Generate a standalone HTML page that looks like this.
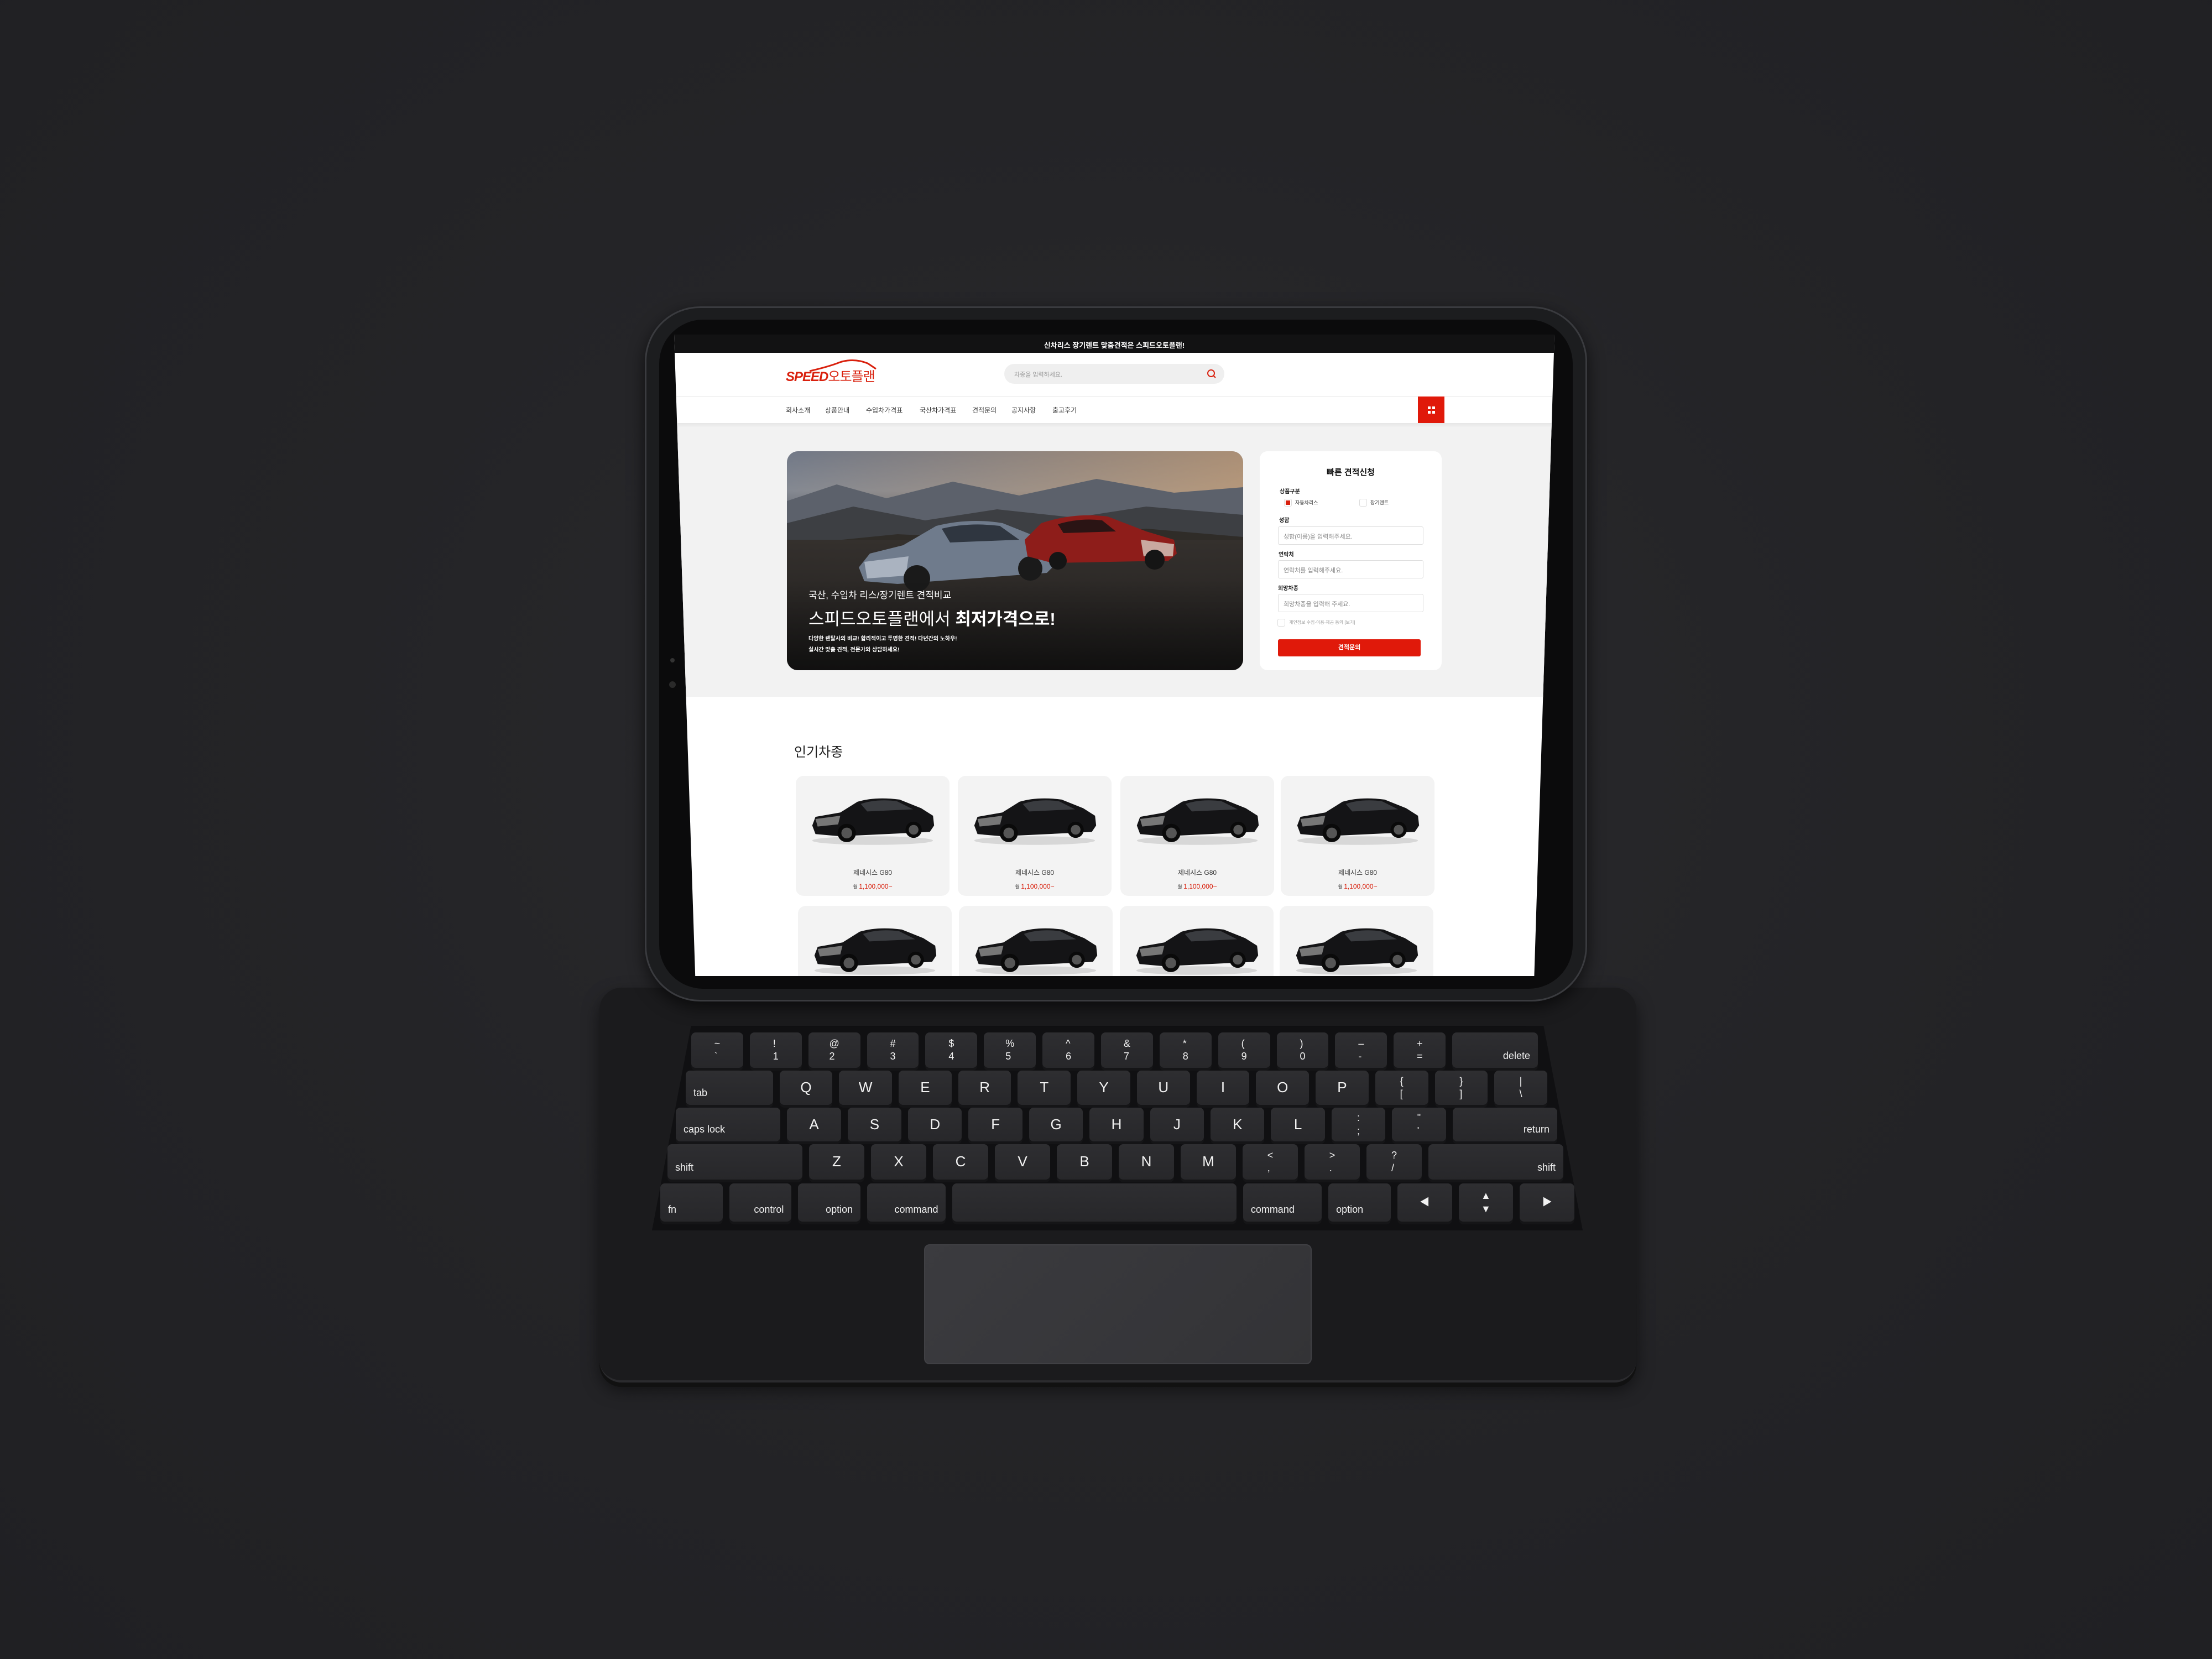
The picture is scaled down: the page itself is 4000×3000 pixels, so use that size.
<!DOCTYPE html>
<html><head><meta charset="utf-8"><style>
*{margin:0;padding:0;box-sizing:border-box}
body{width:4000px;height:3000px;background:#242427;position:relative;overflow:hidden;font-family:"Liberation Sans","Noto Sans CJK KR",sans-serif}
.abs{position:absolute}
#bg{left:0;top:0;width:4000px;height:3000px;background:radial-gradient(ellipse at 50% 45%,#2a2a2d 0%,#242427 50%,#202023 100%)}
#base{left:1084px;top:1786px;width:1875px;height:714px;background:#1b1b1d;border-radius:40px;box-shadow:0 8px 0 #111,0 14px 30px rgba(0,0,0,.5);border-bottom:4px solid #2b2b2e}
#well{left:1179px;top:1855px;width:1683px;height:370px;background:#101012;clip-path:polygon(4.2% 0,95.8% 0,100% 100%,0 100%)}
.row{position:absolute;display:flex;gap:12px}
.k{background:linear-gradient(#2e2e31,#27272a);border-radius:8px;box-shadow:0 5px 0 #151517;color:#f2f2f2;font-size:26px;display:flex;flex-direction:column;align-items:center;justify-content:center;line-height:1.3;flex:1 1 0}
.k.s{font-size:18px}
.k.l{align-items:flex-start;justify-content:flex-end;padding:0 0 10px 14px;font-size:18px}
.k.r{align-items:flex-end;justify-content:flex-end;padding:0 14px 10px 0;font-size:18px}
#pad{left:1671px;top:2250px;width:701px;height:217px;background:linear-gradient(135deg,#3b3b3f,#333336);border-radius:10px;border:2px solid #404044}
#ipad{left:1166px;top:554px;width:1704px;height:1257px;background:#1c1d1f;border-radius:100px;border:3px solid #3a3b3f;box-shadow:0 10px 30px rgba(0,0,0,.6)}
#bezel{left:1192px;top:578px;width:1652px;height:1210px;background:#0b0b0c;border-radius:80px}
#screen{left:1219px;top:605px;width:1592px;height:1160px;background:#fff;clip-path:polygon(0 0,100% 0,97.7% 100%,2.4% 100%);border-radius:0 0 30px 30px;overflow:hidden}
#screen *{position:absolute}
.nav{font-size:12px;color:#333;top:128px}
.card{width:278px;height:217px;background:#f3f3f3;border-radius:14px}
.card .n{width:100%;text-align:center;top:166px;font-size:12px;color:#333}
.card .p{width:100%;text-align:center;top:193px;font-size:12px;color:#d9200d}
.card svg{left:22px;top:28px}
.lbl{font-size:10px;color:#222;font-weight:bold}
.inp{width:263px;height:33px;border:1px solid #ddd;border-radius:3px;font-size:11px;color:#888;padding:9px 0 0 9px;background:#fff}
</style></head><body>
<div id="bg" class="abs"></div>
<svg width="0" height="0" style="position:absolute"><defs>
<symbol id="car" viewBox="0 0 240 100">
<ellipse cx="120" cy="90" rx="112" ry="8" fill="#bbb" opacity=".5"/>
<path d="M8 62 L14 46 L60 38 L92 18 Q125 8 170 14 L210 30 L232 44 L234 62 L226 74 L60 82 L14 78 Z" fill="#141416"/>
<path d="M98 22 Q128 12 165 17 L195 32 L110 36 Z" fill="#3a3c40"/>
<path d="M14 50 L60 44 L56 60 L18 64 Z" fill="#777"/>
<circle cx="72" cy="76" r="17" fill="#0a0a0a"/><circle cx="72" cy="76" r="10" fill="#555"/>
<circle cx="196" cy="70" r="15" fill="#0a0a0a"/><circle cx="196" cy="70" r="9" fill="#555"/>
</symbol></defs></svg>

<div id="base" class="abs"></div>
<div id="well" class="abs"></div>
<div class="row" style="left:1250px;top:1867px;width:1531px;height:64px">
<div class="k s">~<br>`</div><div class="k s">!<br>1</div><div class="k s">@<br>2</div><div class="k s">#<br>3</div><div class="k s">$<br>4</div><div class="k s">%<br>5</div><div class="k s">^<br>6</div><div class="k s">&amp;<br>7</div><div class="k s">*<br>8</div><div class="k s">(<br>9</div><div class="k s">)<br>0</div><div class="k s">–<br>-</div><div class="k s">+<br>=</div><div class="k r" style="flex-grow:1.5">delete</div></div>
<div class="row" style="left:1240px;top:1936px;width:1558px;height:62px">
<div class="k l" style="flex-grow:1.5">tab</div><div class="k">Q</div><div class="k">W</div><div class="k">E</div><div class="k">R</div><div class="k">T</div><div class="k">Y</div><div class="k">U</div><div class="k">I</div><div class="k">O</div><div class="k">P</div><div class="k s">{<br>[</div><div class="k s">}<br>]</div><div class="k s">|<br>\</div></div>
<div class="row" style="left:1222px;top:2003px;width:1594px;height:61px">
<div class="k l" style="flex-grow:1.8">caps lock</div><div class="k">A</div><div class="k">S</div><div class="k">D</div><div class="k">F</div><div class="k">G</div><div class="k">H</div><div class="k">J</div><div class="k">K</div><div class="k">L</div><div class="k s">:<br>;</div><div class="k s">"<br>'</div><div class="k r" style="flex-grow:1.8">return</div></div>
<div class="row" style="left:1207px;top:2069px;width:1620px;height:64px">
<div class="k l" style="flex-grow:2.3">shift</div><div class="k">Z</div><div class="k">X</div><div class="k">C</div><div class="k">V</div><div class="k">B</div><div class="k">N</div><div class="k">M</div><div class="k s">&lt;<br>,</div><div class="k s">&gt;<br>.</div><div class="k s">?<br>/</div><div class="k r" style="flex-grow:2.3">shift</div></div>
<div class="row" style="left:1194px;top:2140px;width:1653px;height:69px">
<div class="k l">fn</div><div class="k r" style="font-size:18px">control</div><div class="k r">option</div><div class="k r" style="flex-grow:1.3">command</div><div class="k" style="flex-grow:5.2"></div><div class="k l" style="flex-grow:1.3">command</div><div class="k l">option</div><div class="k s">◀</div><div class="k s">▲<br>▼</div><div class="k s">▶</div></div>
<div id="pad" class="abs"></div>

<div id="ipad" class="abs"></div>
<div id="bezel" class="abs"></div>
<div class="abs" style="left:1212px;top:1190px;width:8px;height:8px;border-radius:50%;background:#333"></div>
<div class="abs" style="left:1210px;top:1232px;width:12px;height:12px;border-radius:50%;background:#2a2a2a"></div>

<div id="screen" class="abs">
<div style="left:0;top:0;width:1592px;height:33px;background:#121213"></div>
<div style="left:0;top:9px;width:1592px;text-align:center;color:#fff;font-size:13px;font-weight:bold">신차리스 장기렌트 맞춤견적은 스피드오토플랜!</div>
<div style="left:202px;top:56px;font-size:24px;color:#d9200d;font-weight:bold;font-style:italic;letter-spacing:-1px">SPEED<span style="position:static;font-weight:normal;font-style:normal;font-size:24px">오토플랜</span></div>
<svg style="left:240px;top:44px" width="130" height="24" viewBox="0 0 130 24"><path d="M5 22 Q40 14 60 6 Q85 -2 110 8 L125 18" stroke="#d9200d" stroke-width="3" fill="none"/></svg>
<div style="left:597px;top:53px;width:398px;height:36px;background:#efefef;border-radius:18px"></div>
<div style="left:615px;top:64px;font-size:11px;color:#999">차종을 입력하세요.</div>
<svg style="left:963px;top:62px" width="18" height="18" viewBox="0 0 18 18"><circle cx="8" cy="8" r="6" stroke="#d9200d" stroke-width="2" fill="none"/><path d="M12 12 L16 16" stroke="#d9200d" stroke-width="2"/></svg>
<div style="left:0;top:112px;width:1592px;height:1px;background:#e6e6e6"></div>
<div class="nav" style="left:202px">회사소개</div><div class="nav" style="left:273px">상품안내</div><div class="nav" style="left:347px">수입차가격표</div><div class="nav" style="left:444px">국산차가격표</div><div class="nav" style="left:539px">견적문의</div><div class="nav" style="left:610px">공지사항</div><div class="nav" style="left:684px">출고후기</div>
<div style="left:1345px;top:112px;width:48px;height:48px;background:#e0190a"></div>
<div style="left:1363px;top:130px;width:5px;height:5px;background:#fff"></div><div style="left:1371px;top:130px;width:5px;height:5px;background:#fff"></div><div style="left:1363px;top:138px;width:5px;height:5px;background:#fff"></div><div style="left:1371px;top:138px;width:5px;height:5px;background:#fff"></div>
<div style="left:0;top:160px;width:1592px;height:495px;background:#f2f2f2;box-shadow:inset 0 4px 6px rgba(0,0,0,.05)"></div>

<div style="left:204px;top:211px;width:825px;height:396px;border-radius:20px;overflow:hidden;background:linear-gradient(180deg,#6e7480 0%,#8a8c90 18%,#3e3f42 38%,#2c2a28 60%,#1d1c1b 100%)">
<div style="left:0;top:0;width:825px;height:120px;background:linear-gradient(90deg,rgba(120,130,150,.3),rgba(210,160,110,.6))"></div>
<svg style="left:0;top:30px" width="825" height="200" viewBox="0 0 825 200"><path d="M0 60 L90 30 L180 55 L300 25 L420 50 L560 20 L700 45 L825 35 L825 200 L0 200Z" fill="#5c616b"/><path d="M0 100 L120 70 L250 95 L380 75 L520 90 L650 70 L825 85 L825 200 L0 200Z" fill="#3d3f43"/><path d="M0 140 L200 120 L420 130 L650 110 L825 125 L825 200 L0 200Z" fill="#2f2c28"/></svg>
<div style="left:0;top:160px;width:825px;height:236px;background:linear-gradient(180deg,#34302d,#2a2725 50%,#1e1d1c)"></div>
<svg style="left:120px;top:90px" width="420" height="170" viewBox="0 0 420 170"><path d="M10 120 L30 95 L90 80 L150 45 Q210 30 270 40 L320 60 L360 80 L370 110 L350 130 L80 150 L20 145Z" fill="#6f7b8c"/><path d="M160 50 Q210 38 265 45 L300 70 L175 75Z" fill="#2f3640"/><path d="M20 110 L100 100 L95 135 L25 140Z" fill="#aab3c0"/><circle cx="115" cy="140" r="24" fill="#1a1a1a"/><circle cx="320" cy="122" r="22" fill="#1a1a1a"/></svg>
<svg style="left:420px;top:90px" width="300" height="130" viewBox="0 0 300 130"><path d="M10 70 L40 40 Q100 20 160 28 L230 55 L280 70 L285 95 L270 108 L60 112 L15 100Z" fill="#8e1d1a"/><path d="M70 42 Q110 30 150 35 L175 55 L80 58Z" fill="#2a1414"/><path d="M220 70 L280 78 L278 100 L225 100Z" fill="#c9a9a0"/><circle cx="70" cy="108" r="16" fill="#151515"/><circle cx="245" cy="106" r="18" fill="#151515"/></svg>
<div style="left:0;top:230px;width:825px;height:166px;background:linear-gradient(180deg,rgba(0,0,0,0),rgba(0,0,0,.45))"></div>
<div style="left:39px;top:246px;font-size:17px;color:#fff">국산, 수입차 리스/장기렌트 견적비교</div>
<div style="left:39px;top:278px;font-size:31px;color:#fff">스피드오토플랜에서 <b style="position:static">최저가격으로!</b></div>
<div style="left:39px;top:330px;font-size:10px;color:#fff;font-weight:bold">다양한 렌탈사의 비교! 합리적이고 투명한 견적! 다년간의 노하우!</div>
<div style="left:39px;top:350px;font-size:10px;color:#fff;font-weight:bold">실시간 맞춤 견적, 전문가와 상담하세요!</div>
</div>

<div style="left:1059px;top:211px;width:329px;height:396px;background:#fff;border-radius:14px"></div>
<div style="left:1059px;top:238px;width:329px;text-align:center;font-size:15px;font-weight:bold;color:#111">빠른 견적신청</div>
<div class="lbl" style="left:1095px;top:275px">상품구분</div>
<div style="left:1103px;top:297px;width:14px;height:14px;border:1px solid #ddd;border-radius:3px;background:#fff"></div><div style="left:1106px;top:300px;width:8px;height:8px;background:#d9200d"></div>
<div style="left:1123px;top:297px;font-size:9px;color:#333">자동차리스</div>
<div style="left:1239px;top:297px;width:14px;height:14px;border:1px solid #ddd;border-radius:3px;background:#fff"></div>
<div style="left:1259px;top:297px;font-size:9px;color:#333">장기렌트</div>
<div class="lbl" style="left:1094px;top:327px">성함</div>
<div class="inp" style="left:1092px;top:347px">성함(이름)을 입력해주세요.</div>
<div class="lbl" style="left:1093px;top:389px">연락처</div>
<div class="inp" style="left:1092px;top:408px">연락처를 입력해주세요.</div>
<div class="lbl" style="left:1092px;top:450px">희망차종</div>
<div class="inp" style="left:1092px;top:469px">희망차종을 입력해 주세요.</div>
<div style="left:1091px;top:514px;width:14px;height:14px;border:1px solid #ddd;border-radius:3px"></div>
<div style="left:1112px;top:515px;font-size:8px;color:#999">개인정보 수집·이용·제공 동의 [보기]</div>
<div style="left:1092px;top:551px;width:258px;height:31px;background:#e0190a;border-radius:3px;color:#fff;font-size:11px;font-weight:bold;text-align:center;line-height:31px">견적문의</div>

<div style="left:217px;top:735px;font-size:24px;color:#222">인기차종</div>

<div class="card" style="left:220px;top:798px"><svg width="234" height="100"><use href="#car"/></svg><div class="n">제네시스 G80</div><div class="p"><span style="position:static;color:#333;font-size:9px">월 </span>1,100,000~</div></div>
<div class="card" style="left:513px;top:798px"><svg width="234" height="100"><use href="#car"/></svg><div class="n">제네시스 G80</div><div class="p"><span style="position:static;color:#333;font-size:9px">월 </span>1,100,000~</div></div>
<div class="card" style="left:807px;top:798px"><svg width="234" height="100"><use href="#car"/></svg><div class="n">제네시스 G80</div><div class="p"><span style="position:static;color:#333;font-size:9px">월 </span>1,100,000~</div></div>
<div class="card" style="left:1097px;top:798px"><svg width="234" height="100"><use href="#car"/></svg><div class="n">제네시스 G80</div><div class="p"><span style="position:static;color:#333;font-size:9px">월 </span>1,100,000~</div></div>
<div class="card" style="left:224px;top:1033px"><svg width="234" height="100"><use href="#car"/></svg></div>
<div class="card" style="left:515px;top:1033px"><svg width="234" height="100"><use href="#car"/></svg></div>
<div class="card" style="left:806px;top:1033px"><svg width="234" height="100"><use href="#car"/></svg></div>
<div class="card" style="left:1095px;top:1033px"><svg width="234" height="100"><use href="#car"/></svg></div>
</div>
</body></html>
